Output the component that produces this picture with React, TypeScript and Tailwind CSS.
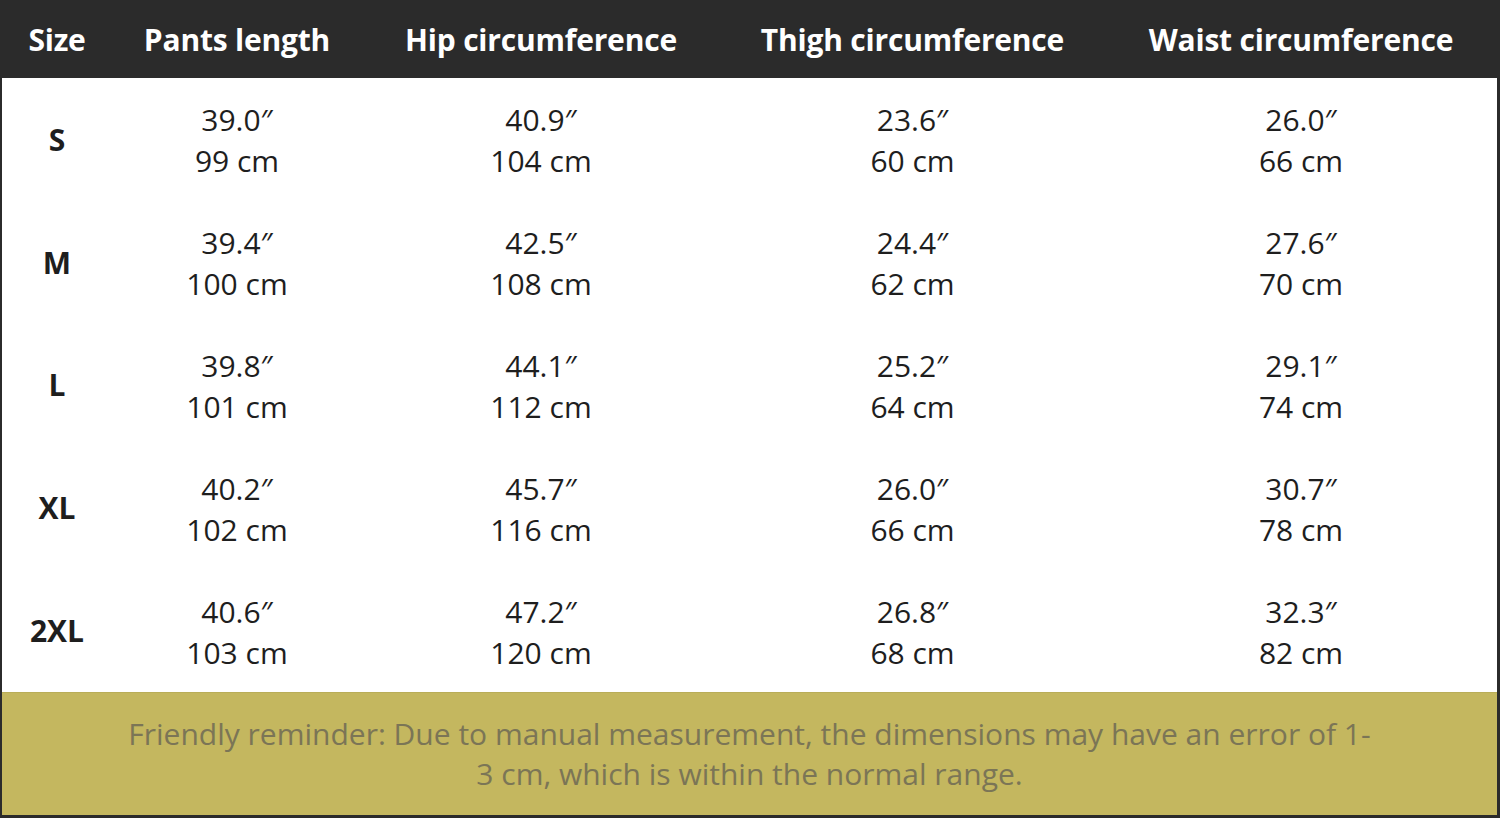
import React from 'react';

interface SizeRow {
  size: string;
  values: [string, string][];
}

const HEADERS = ['Size', 'Pants length', 'Hip circumference', 'Thigh circumference', 'Waist circumference'];

const ROWS: SizeRow[] = [
  { size: 'S', values: [['39.0″', '99 cm'], ['40.9″', '104 cm'], ['23.6″', '60 cm'], ['26.0″', '66 cm']] },
  { size: 'M', values: [['39.4″', '100 cm'], ['42.5″', '108 cm'], ['24.4″', '62 cm'], ['27.6″', '70 cm']] },
  { size: 'L', values: [['39.8″', '101 cm'], ['44.1″', '112 cm'], ['25.2″', '64 cm'], ['29.1″', '74 cm']] },
  { size: 'XL', values: [['40.2″', '102 cm'], ['45.7″', '116 cm'], ['26.0″', '66 cm'], ['30.7″', '78 cm']] },
  { size: '2XL', values: [['40.6″', '103 cm'], ['47.2″', '120 cm'], ['26.8″', '68 cm'], ['32.3″', '82 cm']] },
];

const grid = 'grid grid-cols-[110px_250px_358px_385px_1fr]';

export default function App() {
  return (
    <div
      className="w-[1500px] h-[818px] flex flex-col bg-white border-l-2 border-r-[3px] border-b-[3px] border-[#2b2b2b] overflow-hidden"
      style={{ fontFamily: '"Open Sans", "Noto Sans", sans-serif' }}
    >
      <div className={`${grid} h-[78px] shrink-0 items-center bg-[#2b2b2b] text-white text-[30px] font-bold tracking-[-0.2px]`}>
        {HEADERS.map(h => (
          <div key={h} className="text-center whitespace-nowrap">{h}</div>
        ))}
      </div>

      <div className="h-[614px] shrink-0 flex flex-col bg-white text-[#1e1e1e]">
        {ROWS.map(row => (
          <div key={row.size} className={`${grid} flex-1 items-center`}>
            <div className="text-center text-[30px] font-bold">{row.size}</div>
            {row.values.map(([inch, cm], i) => (
              <div key={i} className="text-center text-[30px] leading-[41px] pt-[2px]">
                <div>{inch}</div>
                <div>{cm}</div>
              </div>
            ))}
          </div>
        ))}
      </div>

      <div className="flex-1 flex items-center justify-center bg-[#c4b75f] border-t border-[#b9ad58]">
        <p className="text-center text-[30px] leading-[40px] text-[#7b7556]">
          Friendly reminder: Due to manual measurement, the dimensions may have an error of 1-
          <br />
          3 cm, which is within the normal range.
        </p>
      </div>
    </div>
  );
}
